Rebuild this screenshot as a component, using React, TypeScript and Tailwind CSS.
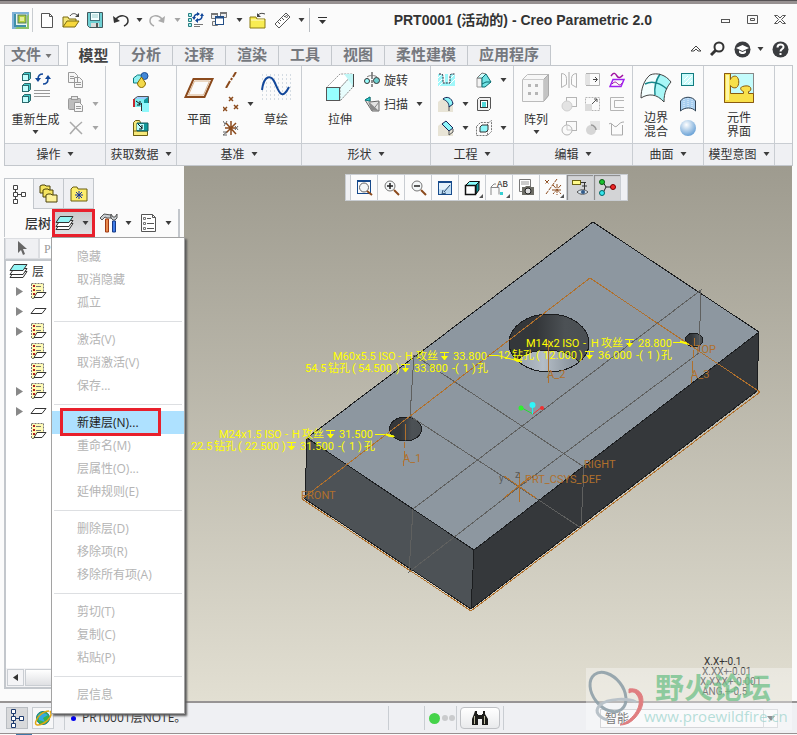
import type { ReactNode } from 'react';

interface IcoProps {
  w?: number;
  h?: number;
  children: ReactNode;
}

function Ico({ w = 16, h = 16, children }: IcoProps) {
  return (
    <svg width={w} height={h} viewBox={`0 0 ${w} ${h}`} fill="none" className="shrink-0" aria-hidden="true">
      {children}
    </svg>
  );
}

function Caret({ light = false }: { light?: boolean }) {
  return (
    <Ico w={7} h={4}>
      <path d="M0.500 0h6L3.500 4z" fill={light ? '#a5a5a5' : '#3c3c3c'} />
    </Ico>
  );
}

/* ---------- quick access icons ---------- */

const AppIcon = () => (
  <Ico w={17} h={17}>
    <rect x="0" y="0" width="17" height="17" fill="#7fb2d8" />
    <path d="M17 2v15H3z" fill="#8cc36a" />
    <rect x="2" y="2" width="13" height="13" fill="#eef6ee" />
    <path d="M3 2v12h11" stroke="#3f8fa8" strokeWidth="2" />
    <rect x="6" y="3" width="8" height="8" fill="#b4cf3c" stroke="#4b7d5c" />
    <rect x="8" y="5" width="4" height="4" fill="#e3ee9a" />
  </Ico>
);

const NewIcon = () => (
  <Ico w={14} h={17}>
    <path d="M1.500 1.500h8l3 3v11h-11z" fill="#fff" stroke="#555" />
    <path d="M9.500 1.500v3h3" stroke="#555" />
  </Ico>
);

const OpenIcon = () => (
  <Ico w={18} h={16}>
    <path d="M1 15V5h5l1 2h7v3" fill="#f4e77a" stroke="#7a6a10" />
    <path d="M1 15l4-6h12l-4 6z" fill="#f7d83c" stroke="#7a6a10" />
    <path d="M8 4c2-3 5-3 7-1" stroke="#444" />
    <path d="M17 1v4h-4z" fill="#444" />
  </Ico>
);

const SaveIcon = () => (
  <Ico w={16} h={16}>
    <path d="M0.500 0.500h15v15h-13l-2-2z" fill="#6fd0d4" stroke="#44585c" />
    <rect x="3.500" y="0.500" width="9" height="8" fill="#f3ffff" stroke="#44707a" />
    <path d="M5 3h6M5 5h6" stroke="#9cc" />
    <rect x="4" y="11" width="8" height="4" fill="#dcdcdc" />
    <rect x="9" y="11" width="2" height="4" fill="#555" />
  </Ico>
);

const UndoIcon = ({ color = '#333' }: { color?: string }) => (
  <Ico w={16} h={14}>
    <path d="M3 6c4-5 12-4 12 2 0 3-2 4-4 5" stroke={color} strokeWidth="1.500" />
    <path d="M0 3l1 7 6-2z" fill={color} />
  </Ico>
);

const RedoIcon = () => (
  <Ico w={16} h={14}>
    <path d="M13 6C9 1 1 2 1 8c0 3 2 4 4 5" stroke="#aaa" strokeWidth="1.500" />
    <path d="M16 3l-1 7-6-2z" fill="#aaa" />
  </Ico>
);

const RegenSmallIcon = () => (
  <Ico w={17} h={16}>
    <path d="M1.500 1.500h3v3h-3zM1.500 6.500h3v3h-3zM1.500 11.500h3v3h-3z" fill="#a7f2f2" stroke="#2a7d80" />
    <path d="M7 6c0-3 2-4 5-4M15 4c0 3-2 4-5 4" stroke="#12479a" strokeWidth="1.500" />
    <path d="M10 0v4l3-2zM11 6v5L8 8.500zM5 5h4L7 8zM13 4h4l-2-3z" fill="#12479a" />
    <path d="M7 12.500h9M7 14.500h6" stroke="#777" />
  </Ico>
);

const WindowsIcon = () => (
  <Ico w={16} h={16}>
    <path d="M0.500 1.500h6v5h-6zM9.500 0.500h6v5h-6zM1.500 9.500h5v4h-5z" fill="#eee" stroke="#777" />
    <path d="M0 2h7M9 1h7" stroke="#777" strokeWidth="2" />
    <rect x="4.500" y="4.500" width="8" height="8" fill="#fff" stroke="#234e87" />
    <path d="M4 5.500h9" stroke="#234e87" strokeWidth="2" />
  </Ico>
);

const FolderCloseIcon = () => (
  <Ico w={17} h={17}>
    <path d="M1 16V5h6l1 2h8v9z" fill="#f8ec52" stroke="#8b7a12" />
    <path d="M2 8h13" stroke="#fffbd0" />
    <path d="M9 3c2-2 4-2 7-1" stroke="#444" />
    <path d="M8 1v4h4z" fill="#444" />
  </Ico>
);

const RulerIcon = () => (
  <Ico w={18} h={17}>
    <path d="M1 12L12 1l4 4L5 16z" fill="#fff" stroke="#555" />
    <path d="M4 10l2 2M6 8l1 1M8 6l2 2M10 4l1 1" stroke="#555" />
    <circle cx="12.500" cy="4.500" r="1" stroke="#555" />
  </Ico>
);

/* ---------- ribbon icons ---------- */

const RegenIcon = () => (
  <Ico w={32} h={32}>
    {[1, 12, 23].map((y) => (
      <g key={y}>
        <path d={`M2.500 ${y + 1.5}l2-2h6v6l-2 2z`} fill="#3fc7c7" stroke="#2b6a6c" />
        <rect x="2.500" y={y + 1.5} width="6" height="6" fill="#c4ffff" stroke="#2b6a6c" />
      </g>
    ))}
    <path d="M18 7c0-4 2-5 5-5M28 7c0 4-2 5-5 5" stroke="#12479a" strokeWidth="1.500" />
    <path d="M15 6h6l-3 4zM25 7h6l-3-4z" fill="#12479a" />
    <path d="M14 18.500h16M14 21.500h16M14 24.500h16" stroke="#999" />
  </Ico>
);

const CopyIcon = () => (
  <Ico>
    <path d="M0.500 0.500h6l3 3v7h-9zM6.500 5.500h5l3 3v7h-8z" fill="#f6f6f6" stroke="#999" />
    <path d="M2 4.500h4M2 6.500h4M8 10.500h5M8 12.500h5" stroke="#999" />
  </Ico>
);

const PasteIcon = () => (
  <Ico>
    <rect x="0.500" y="2.500" width="12" height="11" rx="1" fill="#bdbdbd" stroke="#999" />
    <rect x="3.500" y="0.500" width="6" height="3" fill="#e5e5e5" stroke="#999" />
    <path d="M6.500 6.500h5l3 3v6h-8z" fill="#f6f6f6" stroke="#999" />
    <path d="M8 10.500h5M8 12.500h5" stroke="#999" />
  </Ico>
);

const DeleteIcon = () => (
  <Ico>
    <path d="M2 2l12 12M14 2C9 6 5 10 2 14" stroke="#aaa" strokeWidth="1.500" />
  </Ico>
);

const UserFeatureIcon = () => (
  <Ico>
    <path d="M0.500 6l4-3h4v8h-8z" fill="#8ff0f0" stroke="#0a7c80" />
    <circle cx="11.500" cy="4" r="3.500" fill="#4287d6" stroke="#1d4f96" />
    <path d="M8.500 5l4 6c0 6-8 6-8 0z" fill="#f3d94a" stroke="#8a6b00" />
  </Ico>
);

const CopyGeomIcon = () => (
  <Ico>
    <path d="M0.500 3.500l4-3h11v8h-15z" fill="#9cf" stroke="#555" />
    <rect x="2" y="3" width="9" height="8" fill="#7df0f0" />
    <path d="M11 4l4-3v8l-4 2z" fill="#119a9c" />
    <rect x="0" y="3" width="2" height="8" fill="#c4262e" />
    <path d="M3 5l4 3M7 5v4H4" stroke="#111" />
    <path d="M9 7h7v9H9z" fill="#8ff7fa" />
    <path d="M8.500 7v8" stroke="#333" />
  </Ico>
);

const ShrinkIcon = () => (
  <Ico>
    <path d="M0.500 2.500l2-2h4l1 2v13h-7z" fill="#f6e979" stroke="#6b5e12" />
    <path d="M0.500 11h14v4.500h-14z" fill="#f6e979" stroke="#6b5e12" />
    <path d="M4 3h11v8H4z" fill="#119a9c" stroke="#14585a" />
    <rect x="4" y="4" width="7" height="6" fill="#bff" />
    <path d="M5 4l4 4M9 5v4H6" stroke="#111" />
  </Ico>
);

const PlaneIcon = () => (
  <Ico w={32} h={32}>
    <path d="M10.500 7h19l-8 18h-19z" stroke="#8b4a1c" strokeWidth="2" />
    <path d="M11.500 9h15l-6 14h-15z" stroke="#d9b38c" />
  </Ico>
);

const AxisIcon = () => (
  <Ico>
    <path d="M13 0l-3 5M9 6l-1 2M7 9l-4 7" stroke="#8b4a1c" strokeWidth="2" />
  </Ico>
);

const PointIcon = () => (
  <Ico>
    <path d="M6 1l4 4M10 1L6 5M0 11l4 4M4 11l-4 4M11 9l4 4M15 9l-4 4" stroke="#8b4a1c" strokeWidth="1.500" />
  </Ico>
);

const CsysIcon = () => (
  <Ico>
    <path d="M8 1v14M2 8h11M3 3l10 11M13 3L3 13" stroke="#8b4a1c" strokeWidth="1.500" />
    <path d="M0 1l2 3M4 1L1 6M12 6l3 4M15 6l-3 4M0 12h4l-4 3h4" stroke="#666" />
  </Ico>
);

const SketchIcon = () => (
  <Ico w={32} h={32}>
    {[2, 6, 10, 14, 18, 22, 26].map((y) => (
      <path key={y} d={`M2 ${y + 1}h29`} stroke="#aebdcb" strokeWidth="1" strokeDasharray="1 3" />
    ))}
    <path d="M2 18C4 3 11 2 15 11s7 18 14 4" stroke="#12479a" strokeWidth="2" />
  </Ico>
);

const ExtrudeIcon = () => (
  <Ico w={32} h={32}>
    <path d="M2 16L16 2h13L16 16z" fill="#fff" stroke="#999" strokeDasharray="2 1" />
    <path d="M16 16L29 2v13L16 29z" fill="#e8fdfd" stroke="#888" strokeDasharray="2 1" />
    <path d="M20 2h9v12z" fill="#bff6f6" />
    <path d="M29.500 2v13" stroke="#444" />
    <rect x="2.500" y="15.500" width="13" height="13" fill="#97ffff" stroke="#555" />
  </Ico>
);

const RevolveIcon = () => (
  <Ico>
    <path d="M8 0v16" stroke="#222" strokeDasharray="3 1" />
    <circle cx="3" cy="9" r="2.500" fill="#9ff" stroke="#333" />
    <circle cx="12.500" cy="8.500" r="3" fill="#6ccfcf" stroke="#333" />
    <path d="M3 5c2-2 8-2 10 0" stroke="#777" />
  </Ico>
);

const SweepIcon = () => (
  <Ico>
    <path d="M1 4l5-3v5l9-1v10H8z" fill="#e4e4e4" stroke="#666" />
    <path d="M1 4l5-3v4z" fill="#35cfd2" stroke="#0a7c80" />
    <path d="M4 5l11 10-8-1z" fill="#8a8a8a" />
    <path d="M8 15l7-9" stroke="#888" />
  </Ico>
);

const HoleIcon = () => (
  <Ico w={17}>
    <path d="M0 2h5v9h2V2h3v9h2V2h5v12H0z" fill="#9ff7fa" />
    <path d="M0 6l4-4M0 11l4-4M1 14l5-5M12 12l5-5M13 6l4-4" stroke="#fff" />
    <path d="M1 2h3l1 2v7h7V4l1-2h4" stroke="#223" strokeDasharray="2 1" />
  </Ico>
);

const RoundIcon = () => (
  <Ico>
    <path d="M0 6l5-4 6 2 4 5v7H0z" fill="#e8e4d6" />
    <path d="M5 3c3-3 9-2 10 5l-4 3C11 7 9 5 5 3z" fill="#8ff7fa" stroke="#125" />
    <path d="M11 11v4" stroke="#555" />
  </Ico>
);

const ChamferIcon = () => (
  <Ico>
    <path d="M0 6l5-4 10 8v6H0z" fill="#e8e4d6" />
    <path d="M4 4l4-3 7 7-4 3z" fill="#8ff7fa" stroke="#125" />
    <path d="M11 11v4l4-3V9" stroke="#555" />
  </Ico>
);

const DraftIcon = () => (
  <Ico>
    <path d="M1 6h5v9H1z" fill="#f3f3f3" stroke="#999" />
    <path d="M1 6l5-5 4 1-4 4z" fill="#cff" stroke="#777" />
    <path d="M6 6l4-4 5 8-6 5H6z" fill="#72e3e5" stroke="#0a6c70" />
    <path d="M6 12l4-2 5 0" stroke="#0a6c70" />
  </Ico>
);

const ShellIcon = () => (
  <Ico>
    <path d="M1.500 3.500l2-2h11v11l-2 2h-11z" fill="#f0f0f0" stroke="#555" />
    <rect x="4.500" y="4.500" width="7" height="7" fill="#fff" stroke="#333" />
    <rect x="6" y="6" width="4" height="5" fill="#52d7d9" />
  </Ico>
);

const RibIcon = () => (
  <Ico>
    <path d="M0.500 6.500v9h11l4-4v-11l-4 3v12M0.500 6.500l4-4h8" stroke="#777" strokeDasharray="2 1" />
    <path d="M4 7l2-2h6v5l-2 2H4z" fill="#8ff7fa" stroke="#333" />
  </Ico>
);

const PatternIcon = () => (
  <Ico w={32} h={32}>
    <path d="M2.500 7.500l5-5h21v21l-5 6h-21z" fill="#f7f7f7" stroke="#bbb" />
    <path d="M23.500 7.500l5-5v21l-5 6z" fill="#c4c4c4" stroke="#aaa" />
    <path d="M2.500 7.500h21v22" stroke="#ccc" />
    <path d="M8 12h3v3H8zM15 12h3v3h-3zM8 20h3v3H8zM15 20h3v3h-3z" fill="#b5b5b5" />
  </Ico>
);

const MirrorIcon = () => (
  <Ico>
    <path d="M0.500 1.500c3 0 5 2 5 5v6l-5 3zM15.500 1.500c-3 0-5 2-5 5v6l5 3z" stroke="#b5b5b5" />
    <path d="M8 0v16" stroke="#aaa" />
  </Ico>
);

const ExtendIcon = () => (
  <Ico>
    <path d="M1 1.500h13.500v12H1" stroke="#b0b0b0" />
    <rect x="0" y="2" width="5" height="11" fill="#e3e3e3" />
    <path d="M8 7.500h4M10 5l2.500 2.500L10 10" stroke="#444" />
  </Ico>
);

const OffsetWaveIcon = () => (
  <Ico>
    <path d="M2 4c3-4 4-3 6 0s4 1 6-1" stroke="#a010a0" strokeWidth="1.500" />
    <path d="M4 7.500h11l-3 7H1z" stroke="#a020f0" strokeWidth="1.500" />
    <path d="M3 12c3-3 4-2 6 0s3 0 4-1" stroke="#a010a0" />
  </Ico>
);

const TrimIcon = () => (
  <Ico>
    <rect x="5.500" y="1.500" width="10" height="9" stroke="#b5b5b5" />
    <circle cx="6" cy="10" r="5" fill="#e3e3e3" stroke="#cfcfcf" />
  </Ico>
);

const ScaleIcon = () => (
  <Ico>
    <path d="M0.500 1.500h14v13h-14z" stroke="#b5b5b5" strokeDasharray="2 1" />
    <path d="M0 8h7v7H0z" fill="#dcdcdc" />
    <path d="M7 8l5-5M9 3h3v3" stroke="#555" />
  </Ico>
);

const BracketIcon = () => (
  <Ico>
    <path d="M15 1.500H1.500v13H15M15 4.500H5.500v7H15" stroke="#b5b5b5" />
  </Ico>
);

const MergeIcon = () => (
  <Ico>
    <rect x="5.500" y="1.500" width="10" height="9" fill="#fafafa" stroke="#b5b5b5" />
    <circle cx="6" cy="10" r="5" fill="#fafafa" stroke="#b5b5b5" />
    <path d="M6 5.500V10h5" stroke="#ccc" />
  </Ico>
);

const IntersectIcon = () => (
  <Ico>
    <rect x="5" y="1" width="10" height="9" fill="#e6e6e6" />
    <circle cx="6" cy="10" r="5" fill="#d6d6d6" />
    <path d="M6 5c3 0 5 3 5 5" stroke="#999" strokeWidth="1.500" />
  </Ico>
);

const ProjectIcon = () => (
  <Ico>
    <path d="M0 4c3-3 5 5 8 2s4-4 7-4M2.500 4v11h11V5" stroke="#aaa" />
  </Ico>
);

const BoundaryIcon = () => (
  <Ico w={32} h={32}>
    <path d="M10 3c7-3 16 0 21 7-4 5-7 10-7 20C17 22 9 21 1 26 1 17 4 8 10 3z" fill="#f3fefe" />
    <path d="M18 3c5-1 9 2 13 7-4 5-7 10-7 20l-9-7c0-8 1-14 3-20z" fill="#a8f7f7" />
    <path d="M20 2c-4 6-6 13-5 21M5 12c8-4 16 0 22 5" stroke="#17888c" strokeWidth="1.500" />
    <path d="M10 3c7-3 16 0 21 7-4 5-7 10-7 20C17 22 9 21 1 26 1 17 4 8 10 3z" stroke="#444" />
  </Ico>
);

const FillIcon = () => (
  <Ico>
    <rect x="1.500" y="1.500" width="12" height="12" fill="#c9fbfb" stroke="#127c80" />
    <path d="M4 12l8-8M4 8l4-4M8 12l4-4" stroke="#fff" />
  </Ico>
);

const StyleIcon = () => (
  <Ico>
    <path d="M0.500 14V5c3-5 12-5 15 0v10c-3-4-11-4-15 0z" fill="#a9cff0" stroke="#345" />
    <path d="M4 3v9M8 2v9M12 3v9" stroke="#e9f5ff" strokeDasharray="1 1" />
  </Ico>
);

const FreestyleIcon = () => (
  <Ico>
    <defs>
      <radialGradient id="ball" cx="0.4" cy="0.3" r="0.7">
        <stop offset="0" stopColor="#fff" />
        <stop offset="1" stopColor="#6aa2d6" />
      </radialGradient>
    </defs>
    <circle cx="8" cy="8" r="8" fill="url(#ball)" />
  </Ico>
);

const ComponentIcon = () => (
  <Ico w={32} h={32}>
    <rect x="1.500" y="1.500" width="29" height="29" fill="#c3fbfb" stroke="#888" />
    <path
      d="M1.500 1.500h6v6c1-3 4-4 6-3 3 2 3 9 0 11-2 1-5 0-6-2v8h13v-2c-3-1-4-4-1-5 3-1 7-1 8 1s0 4-2 4v2h5v9h-29z"
      fill="#f8e04a"
      stroke="#8a5a10"
    />
    <path d="M3 3h3v25H3z" fill="#fdf7a8" />
  </Ico>
);

/* ---------- navigator icons ---------- */

const TreeIcon = ({ color = '#444' }: { color?: string }) => (
  <Ico w={14} h={20}>
    <path d="M1.500 1.500h4v4h-4zM1.500 8.500h4v4h-4zM1.500 15.500h4v4h-4zM9.500 8.500h4v4h-4z" stroke={color} fill="#fff" />
    <path d="M3.500 5.500v3M3.500 12.500v3M5.500 10.500h4" stroke={color} />
  </Ico>
);

const FoldersIcon = () => (
  <Ico w={19} h={20}>
    <path d="M1 9V2l2-1h3l1 1h4v7z" fill="#f5e45f" stroke="#4d430a" />
    <path d="M4 13V6l2-1h3l1 1h4v7z" fill="#f5e45f" stroke="#4d430a" />
    <path d="M7 18v-7l2-1h3l1 1h5v7z" fill="#fdf29a" stroke="#4d430a" />
  </Ico>
);

const FavoritesIcon = () => (
  <Ico w={18} h={16}>
    <path d="M1 15V3l2-2h4l1 2h9v12z" fill="#fdee6d" stroke="#6b5e12" />
    <path d="M9 5v8M5 9h8M6 6l6 6M12 6l-6 6" stroke="#1430a0" />
  </Ico>
);

const LayersIcon = () => (
  <Ico w={19} h={16}>
    <path d="M5 8.500h13l-4 6H1z" fill="#fff" stroke="#333" />
    <path d="M5 5.500h13l-4 6H1z" fill="#fff" stroke="#333" />
    <path d="M5 1.500h13l-4 6H1z" fill="#93f5f5" stroke="#333" />
  </Ico>
);

const ToolsIcon = () => (
  <Ico w={20} h={20}>
    <path d="M1 5l4-4 7 1v3H8L6 4 3 7z" fill="#c9ced2" stroke="#555" />
    <path d="M6.500 6h3v13h-3z" fill="#e88a4e" stroke="#a03a14" />
    <path d="M12 1v4l2 2h2l2-2V1l-2 3h-2z" fill="#c9ced2" stroke="#555" />
    <path d="M13.500 8h3v11h-3z" fill="#3f7ce8" stroke="#173a86" />
  </Ico>
);

const SettingsIcon = () => (
  <Ico w={17} h={20}>
    <path d="M1.500 1.500h11l3 3v14h-14z" fill="#fff" stroke="#555" />
    <path d="M12.500 1.500v3h3M7 5.500h4M7 10.500h7M7 15.500h7" stroke="#555" />
    <path d="M3.500 4.500h2v2h-2zM3.500 9.500h2v2h-2zM3.500 14.500h2v2h-2z" stroke="#777" />
  </Ico>
);

const LayerNoteIcon = () => (
  <Ico w={17} h={17}>
    <path d="M1.500 0.500h12v9l-5 1-4 5h-3z" fill="#fffbb5" stroke="#777" strokeDasharray="2 1" />
    <path d="M3 2h2v2H3zM3 6h2v2H3zM3 10h2v2H3z" fill="#b02020" />
    <path d="M6 3.500h5M6 7.500h5" stroke="#777" />
    <path d="M7 9.500h9l-4 5H4z" fill="#fff" stroke="#333" />
  </Ico>
);

const PlainLayerIcon = () => (
  <Ico w={17} h={8}>
    <path d="M5 1.500h11l-4 5H1z" fill="#fff" stroke="#333" />
  </Ico>
);

const GlobeIcon = () => (
  <Ico w={18} h={18}>
    <circle cx="9" cy="9" r="6.500" fill="#37b34a" stroke="#137a8a" />
    <path d="M4 6c3-3 7-2 10 0l-5 3 2 4-6-2z" fill="#35a8e0" />
    <path d="M16 2c3 4-1 9-6 12s-10 3-8-2c1-4 7-10 13-10" stroke="#e0a712" strokeWidth="1.500" />
  </Ico>
);

/* ---------- view toolbar icons ---------- */

const lens = (
  <>
    <circle cx="7" cy="7" r="5" fill="#f4f7f8" stroke="#777" />
    <path d="M11 11l5 5" stroke="#8b4a1c" strokeWidth="2" />
  </>
);

const viewIcons: { name: string; on?: boolean; more?: boolean; icon: ReactNode }[] = [
  {
    name: '重新调整',
    icon: (
      <Ico w={17} h={17}>
        <rect x="1.500" y="2.500" width="13" height="12" stroke="#164a8c" />
        <path d="M1 2h14" stroke="#164a8c" strokeWidth="2" />
        <circle cx="8" cy="8.500" r="4.500" fill="#f4f7f8" stroke="#666" />
        <path d="M11 12l5 4" stroke="#8b4a1c" strokeWidth="2" />
      </Ico>
    ),
  },
  { name: '放大', icon: <Ico w={17} h={17}>{lens}<path d="M4 7h6M7 4v6" stroke="#222" strokeWidth="1.500" /></Ico> },
  { name: '缩小', icon: <Ico w={17} h={17}>{lens}<path d="M4 7h6" stroke="#222" strokeWidth="1.500" /></Ico> },
  {
    name: '重画',
    icon: (
      <Ico w={16} h={16}>
        <rect x="1.500" y="1.500" width="13" height="13" fill="#e4f2fc" stroke="#164a8c" />
        <path d="M1 2h14" stroke="#164a8c" strokeWidth="2" />
        <path d="M2 9c5 2 9-1 12-6v11H2z" fill="#bfdcf2" />
        <path d="M13 5l-6 7M6 10l-1 4 4-1" stroke="#274a6e" />
      </Ico>
    ),
  },
  {
    name: '显示样式',
    more: true,
    icon: (
      <Ico w={16} h={16}>
        <path d="M1.500 5.500l4-4h10l-3 4z" fill="#8ff" stroke="#111" />
        <path d="M12 5l3-3v8l-3 4z" fill="#119a9c" stroke="#111" />
        <rect x="1.500" y="5.500" width="10" height="9" fill="#fff" stroke="#111" strokeWidth="1.500" />
      </Ico>
    ),
  },
  {
    name: '已命名视图',
    more: true,
    icon: (
      <Ico w={18} h={16}>
        <path d="M1 15V7l3-3h2M1 7.500h8v7" stroke="#888" />
        <path d="M10 12h3v3h-3z" fill="#35cfd2" />
        <text x="7" y="7" fontSize="9" fill="#222" fontFamily="Liberation Mono">AB</text>
      </Ico>
    ),
  },
  {
    name: '视图管理器',
    icon: (
      <Ico w={17} h={17}>
        <path d="M1.500 0.500h11v12h-11z" fill="#fff" stroke="#777" />
        <path d="M3 3h8M3 5h8" stroke="#999" />
        <path d="M4 8h3l1-1h4l1 1h3v8H4z" fill="#6d6d66" />
        <circle cx="10" cy="12" r="3" fill="#ddd" stroke="#222" />
      </Ico>
    ),
  },
  {
    name: '基准显示过滤器',
    more: true,
    icon: (
      <Ico w={18} h={17}>
        <path d="M1 1l4 4M5 1L1 5M13 0L2 15M9 6l8 9M17 6l-8 9M13 5v11M8 11h10" stroke="#8b4a1c" strokeDasharray="4 1" />
      </Ico>
    ),
  },
  {
    name: '注释显示',
    on: true,
    icon: (
      <Ico w={17} h={17}>
        <rect x="0.500" y="1.500" width="8" height="4" fill="#fffb8a" stroke="#6b6212" />
        <path d="M9 3.500h5M10 7h5M12.500 4v7" stroke="#333" />
        <path d="M5 13c3-3 8-3 11 0-3 3-8 3-11 0z" fill="#d9e6f0" stroke="#555" />
        <circle cx="11" cy="13" r="2" fill="#335b8a" />
      </Ico>
    ),
  },
  {
    name: '旋转中心',
    on: true,
    icon: (
      <Ico w={17} h={17}>
        <path d="M4 3l3 5h7M7 8l-3 6" stroke="#222" />
        <circle cx="3" cy="3" r="2.500" fill="#19c430" stroke="#0a5a14" />
        <circle cx="14" cy="8" r="2.500" fill="#f02828" stroke="#700" />
        <circle cx="3" cy="14" r="2.500" fill="#35e5ee" stroke="#066" />
      </Ico>
    ),
  },
];

/* ---------- title bar ---------- */

function QuickButton({ label, className, children }: { label: string; className: string; children: ReactNode }) {
  return (
    <button type="button" aria-label={label} className={`flex h-6 items-center justify-center ${className}`}>
      {children}
    </button>
  );
}

function TitleBar() {
  return (
    <header className="flex h-8 items-center pl-2">
      <QuickButton label="Creo" className="w-6"><AppIcon /></QuickButton>
      <span className="h-6 w-px bg-[#c8ccd0]" />
      <QuickButton label="新建" className="w-7"><NewIcon /></QuickButton>
      <QuickButton label="打开" className="w-5"><OpenIcon /></QuickButton>
      <QuickButton label="保存" className="w-7"><SaveIcon /></QuickButton>
      <QuickButton label="撤消" className="w-6"><UndoIcon /></QuickButton>
      <QuickButton label="撤消列表" className="w-3"><Caret /></QuickButton>
      <QuickButton label="重做" className="w-6"><RedoIcon /></QuickButton>
      <QuickButton label="重做列表" className="w-4"><Caret light /></QuickButton>
      <QuickButton label="重新生成" className="w-5"><RegenSmallIcon /></QuickButton>
      <QuickButton label="窗口" className="w-7"><WindowsIcon /></QuickButton>
      <QuickButton label="窗口列表" className="w-3"><Caret /></QuickButton>
      <QuickButton label="关闭" className="w-6"><FolderCloseIcon /></QuickButton>
      <QuickButton label="测量" className="w-7"><RulerIcon /></QuickButton>
      <QuickButton label="测量列表" className="w-2"><Caret /></QuickButton>
      <span className="ml-1 h-6 w-px bg-[#b9bdc2]" />
      <QuickButton label="自定义快速访问工具栏" className="w-6">
        <Ico w={9} h={7}>
          <path d="M0 0.500h9" stroke="#333" />
          <path d="M1 3h7L4.500 7z" fill="#333" />
        </Ico>
      </QuickButton>
      <h1 className="ml-auto font-['Liberation_Sans','Noto_Sans_CJK_SC',sans-serif] text-[14px] font-bold whitespace-nowrap text-[#333]">
        PRT0001 (活动的) - Creo Parametric 2.0
      </h1>
      <div className="ml-[66px] flex w-[79px] items-center gap-[11px]">
        <button type="button" aria-label="最小化" className="flex h-5 w-4 items-center justify-center">
          <Ico w={10} h={10}><rect x="0.500" y="4.500" width="8" height="3" stroke="#555" /></Ico>
        </button>
        <button type="button" aria-label="还原" className="flex h-5 w-4 items-center justify-center">
          <Ico w={12} h={10}><path d="M0.500 0.500h10v8h-10zM3.500 3.500h4v2h-4z" stroke="#555" /></Ico>
        </button>
        <button type="button" aria-label="关闭窗口" className="flex h-5 w-4 items-center justify-center">
          <Ico w={12} h={10}>
            <path d="M0.500 0.500h3L6 3l2.500-2.500h3L7.500 4.500l4 4h-3L6 6 3.500 8.500h-3l4-4z" stroke="#555" />
          </Ico>
        </button>
      </div>
    </header>
  );
}

/* ---------- ribbon ---------- */

const tabs = ['分析', '注释', '渲染', '工具', '视图'];

function TabRow() {
  return (
    <nav className="flex h-[29px] items-end text-[15px] leading-4 font-bold text-[#75787e]">
      <button type="button" className="flex h-5 w-[55px] justify-center gap-1 border border-b-0 border-[#c3c7cc] bg-[#eff0f3]">
        文件
        <span className="mt-2"><Ico w={7} h={4}><path d="M0.500 0h6L3.500 4z" fill="#777" /></Ico></span>
      </button>
      <button type="button" className="relative z-10 -mb-px ml-2 h-6 w-[53px] border border-b-0 border-[#c3c7cc] bg-[#fbfbfb] text-[#444]">
        模型
      </button>
      {tabs.map((t) => (
        <button key={t} type="button" className="flex h-5 w-[53px] justify-center border-t border-r border-[#c3c7cc] bg-[#eff0f3]">
          {t}
        </button>
      ))}
      <button type="button" className="flex h-5 w-[83px] justify-center border-t border-r border-[#c3c7cc] bg-[#eff0f3]">柔性建模</button>
      <button type="button" className="flex h-5 w-[83px] justify-center border-t border-r border-[#c3c7cc] bg-[#eff0f3]">应用程序</button>
      <div className="mr-1 ml-auto flex h-8 items-center gap-2">
        <button type="button" aria-label="最小化功能区">
          <Ico w={12} h={8}><path d="M1 6l5-5 5 5H8L6 4 4 6z" stroke="#444" /></Ico>
        </button>
        <button type="button" aria-label="搜索">
          <Ico w={16} h={16}>
            <circle cx="9" cy="6" r="4.500" stroke="#333" strokeWidth="2" />
            <path d="M6 9l-5 5" stroke="#333" strokeWidth="3" />
          </Ico>
        </button>
        <button type="button" aria-label="学习" className="flex items-center gap-1.5">
          <Ico w={17} h={17}>
            <circle cx="8.500" cy="8.500" r="8" fill="#3a3c3f" />
            <path d="M2 7l6.500-3L15 7l-6.500 3z" fill="#fff" />
            <path d="M5 9.500v2c2 2 5 2 7 0v-2l-3.500 1.500z" fill="#fff" />
          </Ico>
          <Caret />
        </button>
        <button type="button" aria-label="帮助">
          <Ico w={17} h={17}>
            <circle cx="8.500" cy="8.500" r="8" fill="#3a3c3f" />
            <path d="M5.500 6.500c0-4 6-4 6-0.500 0 2-3 2-3 4.500" stroke="#fff" strokeWidth="2" />
            <rect x="7.500" y="12" width="2" height="2" fill="#fff" />
          </Ico>
        </button>
      </div>
    </nav>
  );
}

function Group({ title, className, children }: { title: string; className: string; children: ReactNode }) {
  return (
    <section className={`flex flex-col border-r border-[#c9cdd2] ${className}`}>
      <div className="flex h-[77px] pt-0.5">{children}</div>
      <button type="button" className="flex h-[22px] items-center justify-center gap-1.5 border-t border-[#c9cdd2] bg-[#eff0f3] pb-0.5">
        {title}
        <Caret />
      </button>
    </section>
  );
}

function BigButton({ lines, icon, caret, className = '' }: { lines: string[]; icon: ReactNode; caret?: boolean; className?: string }) {
  return (
    <button type="button" className={`flex shrink-0 flex-col items-center pt-1 leading-[14px] whitespace-nowrap ${className}`}>
      {icon}
      <span className={lines.length > 1 ? 'mt-1.5' : 'mt-2'}>
        {lines.map((l) => (
          <span key={l} className="block">{l}</span>
        ))}
      </span>
      {caret && <span className="mt-1"><Caret /></span>}
    </button>
  );
}

function Cell({ label, icon, caret, text, light }: { label: string; icon: ReactNode; caret?: boolean; text?: boolean; light?: boolean }) {
  return (
    <button type="button" aria-label={label} className="flex h-6 items-center gap-1 whitespace-nowrap">
      {icon}
      {text && label}
      {caret && <span className="ml-1"><Caret light={light} /></span>}
    </button>
  );
}

function Ribbon() {
  return (
    <div className="flex border border-[#c3c7cc] bg-[#fbfbfb] text-[12px] text-[#333]">
      <Group title="操作" className="w-[101px]">
        <BigButton className="w-[61px]" lines={['重新生成']} icon={<RegenIcon />} caret />
        <div className="ml-0.5">
          <Cell label="复制" icon={<CopyIcon />} />
          <Cell label="粘贴" icon={<PasteIcon />} caret light />
          <Cell label="删除" icon={<DeleteIcon />} caret light />
        </div>
      </Group>
      <Group title="获取数据" className="w-[71px]">
        <div className="mx-auto">
          <Cell label="用户定义特征" icon={<UserFeatureIcon />} />
          <Cell label="复制几何" icon={<CopyGeomIcon />} />
          <Cell label="收缩包络" icon={<ShrinkIcon />} />
        </div>
      </Group>
      <Group title="基准" className="w-[125px]">
        <BigButton className="w-11" lines={['平面']} icon={<PlaneIcon />} />
        <div className="ml-0.5">
          <Cell label="轴" icon={<AxisIcon />} />
          <Cell label="点" icon={<PointIcon />} caret />
          <Cell label="坐标系" icon={<CsysIcon />} />
        </div>
        <BigButton className="w-11" lines={['草绘']} icon={<SketchIcon />} />
      </Group>
      <Group title="形状" className="w-[129px]">
        <BigButton className="ml-4 w-11" lines={['拉伸']} icon={<ExtrudeIcon />} />
        <div className="ml-0.5">
          <Cell label="旋转" icon={<RevolveIcon />} text />
          <Cell label="扫描" icon={<SweepIcon />} text caret />
        </div>
      </Group>
      <Group title="工程" className="w-[83px]">
        <div className="ml-[7px] w-[38px]">
          <Cell label="孔" icon={<HoleIcon />} />
          <Cell label="倒圆角" icon={<RoundIcon />} caret />
          <Cell label="倒角" icon={<ChamferIcon />} caret />
        </div>
        <div>
          <Cell label="拔模" icon={<DraftIcon />} caret />
          <Cell label="壳" icon={<ShellIcon />} />
          <Cell label="筋" icon={<RibIcon />} caret />
        </div>
      </Group>
      <Group title="编辑" className="w-[119px]">
        <BigButton className="ml-1 w-9" lines={['阵列']} icon={<PatternIcon />} caret />
        <div className="ml-[7px] grid h-[72px] grid-cols-[24px_24px_24px]">
          <Cell label="镜像" icon={<MirrorIcon />} />
          <Cell label="延伸" icon={<ExtendIcon />} />
          <Cell label="投影" icon={<OffsetWaveIcon />} />
          <Cell label="修剪" icon={<TrimIcon />} />
          <Cell label="偏移" icon={<ScaleIcon />} />
          <Cell label="加厚" icon={<BracketIcon />} />
          <Cell label="合并" icon={<MergeIcon />} />
          <Cell label="相交" icon={<IntersectIcon />} />
          <Cell label="实体化" icon={<ProjectIcon />} />
        </div>
      </Group>
      <Group title="曲面" className="w-[71px]">
        <BigButton className="ml-[3px] w-10" lines={['边界', '混合']} icon={<BoundaryIcon />} />
        <div className="ml-1">
          <Cell label="填充" icon={<FillIcon />} />
          <Cell label="样式" icon={<StyleIcon />} />
          <Cell label="自由式" icon={<FreestyleIcon />} />
        </div>
      </Group>
      <Group title="模型意图" className="w-[71px]">
        <BigButton className="mx-auto w-10" lines={['元件', '界面']} icon={<ComponentIcon />} />
      </Group>
      <div className="flex-1 pt-[77px]">
        <div className="h-[22px] border-t border-[#c9cdd2] bg-[#eff0f3]" />
      </div>
    </div>
  );
}

/* ---------- navigator ---------- */

const treeRows = [
  { open: true, note: true },
  { open: true, note: false },
  { open: true, note: true },
  { open: false, note: true },
  { open: false, note: true },
  { open: true, note: true },
  { open: true, note: false },
  { open: false, note: true },
];

const menuGroups = [
  ['隐藏', '取消隐藏', '孤立'],
  ['激活(V)', '取消激活(V)', '保存...'],
  ['新建层(N)...', '重命名(M)', '层属性(O)...', '延伸规则(E)'],
  ['删除层(D)', '移除项(R)', '移除所有项(A)'],
  ['剪切(T)', '复制(C)', '粘贴(P)'],
  ['层信息'],
];

function LayerMenu() {
  return (
    <div
      role="menu"
      className="absolute top-7 left-[47px] z-20 w-[134px] border border-[#a3a3a3] bg-white py-[7px] font-['Open_Sans','Noto_Sans_CJK_SC',sans-serif] text-[12px] shadow-[2px_2px_2px_#5a5a5a]"
    >
      {menuGroups.map((group, i) => (
        <div key={group[0]}>
          {i > 0 && <div className="mx-0.5 my-1.5 h-0.5 border-b border-[#dddfe2]" />}
          {group.map((item) => {
            const active = item === '新建层(N)...';
            return (
              <button
                key={item}
                type="button"
                role="menuitem"
                disabled={!active}
                className={`relative block h-[23px] w-full pl-[25px] text-left leading-[23px] ${active ? 'bg-[#aee1ff] text-[#222]' : 'text-[#b4b4b4]'}`}
              >
                {item}
                {active && <span className="absolute -top-[3px] left-2 h-7 w-[101px] border-[3px] border-[#e8202c]" />}
              </button>
            );
          })}
        </div>
      ))}
    </div>
  );
}

function Navigator() {
  return (
    <aside className="flex w-[180px] shrink-0 flex-col pt-3">
      <div className="flex h-[31px]">
        <button type="button" aria-label="模型树" className="flex w-[30px] items-center justify-center border border-b-0 border-[#c3c7cc]">
          <TreeIcon />
        </button>
        <button type="button" aria-label="文件夹浏览器" className="flex w-[30px] items-center justify-center border border-l-0 border-[#c3c7cc] bg-[#eff0f3]">
          <FoldersIcon />
        </button>
        <button type="button" aria-label="收藏夹" className="flex w-[30px] items-center justify-center border border-l-0 border-[#c3c7cc] bg-[#eff0f3]">
          <FavoritesIcon />
        </button>
      </div>
      <div className="relative flex min-h-0 flex-1 flex-col">
        <div className="mr-1 flex h-7 shrink-0 items-center border-r-2 border-l border-[#c3c7cc]">
          <span className="w-[46px] text-right text-[13px] font-medium text-[#333]">层树</span>
          <button
            type="button"
            aria-label="层"
            className="ml-px flex h-full w-[43px] items-center gap-2 border-[3px] border-[#e8202c] bg-linear-to-b from-[#c9cacc] to-[#e0e1e3]"
          >
            <LayersIcon />
            <Caret />
          </button>
          <button type="button" aria-label="设置" className="ml-1 flex items-center gap-1.5">
            <ToolsIcon />
            <Caret />
          </button>
          <button type="button" aria-label="显示" className="ml-2 flex items-center gap-2">
            <SettingsIcon />
            <Caret />
          </button>
        </div>
        <div className="mt-px flex h-[21px] shrink-0 border-l border-[#c3c7cc]">
          <button type="button" aria-label="选择" className="flex w-[34px] items-center justify-center border border-[#dcdee2] bg-[#eff0f3]">
            <Ico w={10} h={15}>
              <path d="M1 0v12l3-3 2 5 2-1-2-5h4z" fill="#666" />
            </Ico>
          </button>
          <input
            aria-label="活动模型"
            defaultValue="P"
            className="min-w-0 flex-1 border border-[#dcdee2] bg-white pl-1 font-['Liberation_Serif',serif] text-[12px] text-[#999]"
          />
        </div>
        <div className="mb-3 flex min-h-0 flex-1 flex-col border-2 border-[#c3c7cc] bg-white text-[12px]">
          <div className="flex h-5 items-center gap-1 pl-[3px] text-[#333]">
            <LayersIcon />
            层
          </div>
          {treeRows.map((row, i) => (
            <div key={i} className="flex h-5 items-center pl-2.5">
              <span className="w-[14px]">
                {row.open && <Ico w={7} h={9}><path d="M0 0l7 4.500L0 9z" fill="#888" /></Ico>}
              </span>
              {row.note ? <LayerNoteIcon /> : <PlainLayerIcon />}
            </div>
          ))}
          <div className="mt-auto flex h-[19px] gap-px bg-[#f3f3f5] p-px">
            <button type="button" aria-label="向左滚动" className="flex w-[17px] items-center justify-center border border-[#c9cdd2] bg-[#f4f4f6]">
              <Ico w={5} h={7}><path d="M5 0v7L0 3.500z" fill="#333" /></Ico>
            </button>
            <div className="w-28 border border-[#c9cdd2] bg-linear-to-b from-white to-[#dfe0e3]" />
          </div>
        </div>
        <LayerMenu />
      </div>
    </aside>
  );
}

/* ---------- graphics window ---------- */

interface NoteProps {
  x: number;
  y: number;
  depth: number; // offset of the hole depth symbol
  parts: [number, string][];
}

function Note({ x, y, depth, parts }: NoteProps) {
  return (
    <g>
      <text y={y}>
        {parts.map(([dx, t]) => (
          <tspan key={dx} x={x + dx}>{t}</tspan>
        ))}
      </text>
      <path
        d={`M${x + depth} ${y - 7.5}h9M${x + depth + 4.5} ${y - 7.5}v7M${x + depth + 1.5} ${y - 4}l3 4 3-4`}
        stroke="#ffff00"
      />
    </g>
  );
}

function Model() {
  return (
    <svg viewBox="184 166 608 535" className="absolute inset-0 h-full w-full" fill="none" role="img" aria-label="PRT0001">
      <defs>
        <linearGradient id="bore" x1="0" x2="1">
          <stop offset="0" stopColor="#34373a" />
          <stop offset="0.350" stopColor="#34373a" />
          <stop offset="0.700" stopColor="#4c5155" />
          <stop offset="1" stopColor="#4a4f53" />
        </linearGradient>
        <linearGradient id="floor" x1="0" x2="1">
          <stop offset="0" stopColor="#8d97a0" />
          <stop offset="0.450" stopColor="#b4bdc6" />
          <stop offset="0.800" stopColor="#8d97a0" />
        </linearGradient>
        <clipPath id="bigHole">
          <ellipse cx="549" cy="343" rx="40" ry="29" />
        </clipPath>
      </defs>

      <g shapeRendering="crispEdges">
        <path d="M593 222L759 332 474 550 307 438z" fill="#8d97a0" />
        <path d="M307 438L474 550 471 609 305 499z" fill="#4d5256" />
        <path d="M474 550L759 332 757 391 471 609z" fill="#35383b" />
        <path d="M593 222L759 332 474 550 307 438zM307 438l-2 61 166 110 3-59M759 332l-2 59-286 218" stroke="#1b1d1f" />

        <ellipse cx="549" cy="343" rx="40" ry="29" fill="url(#bore)" />
        <ellipse cx="547" cy="379" rx="40" ry="29" fill="url(#floor)" stroke="#222" clipPath="url(#bigHole)" />
        <ellipse cx="549" cy="343" rx="40" ry="29" stroke="#1b1d1f" />
        <ellipse cx="405.500" cy="429" rx="16" ry="12" fill="url(#bore)" stroke="#1b1d1f" />
        <ellipse cx="694" cy="340" rx="9" ry="7" fill="url(#bore)" stroke="#1b1d1f" />

        <g stroke="#5f605f">
          <path d="M701 290L413 509l-4 63 110-85 180-134z" />
          <path d="M414 355l170 112-3 61-62-41-109-71z" />
        </g>
        <g stroke="#b0702c">
          <path d="M302 499L590 278l170 114-289 219z" />
          <path d="M405.500 424v16M404.500 442v6M404.500 451v7M403.500 461v5M548.500 340v32M548.500 375v8M694.500 338v8M693.500 350v8M692.500 361v12M691.500 377v6" />
          <path d="M519.500 473v29M504 476l32 22M504 498l27-22" />
        </g>
      </g>

      <path d="M533 414l-11-6" stroke="#20e030" />
      <path d="M533 414l9-7" stroke="#f03030" />
      <path d="M532.500 414v-8" stroke="#20f0f0" />
      <circle cx="521" cy="408" r="2.500" fill="#30f030" />
      <circle cx="542" cy="408" r="2" fill="#f03030" />
      <circle cx="532.500" cy="405" r="3" fill="#30f5f8" />

      <g fill="#b0702c" fontSize="11">
        <text x="403" y="462">A_1</text>
        <text x="547" y="378">A_2</text>
        <text x="691" y="378">A_3</text>
        <text x="695" y="353">TOP</text>
        <text x="584" y="468">RIGHT</text>
        <text x="301" y="499">FRONT</text>
        <text x="525" y="483">PRT_CSYS_DEF</text>
      </g>
      <g fill="#5a5b5b" fontSize="10">
        <text x="515" y="478">z</text>
        <text x="499" y="482">y</text>
      </g>

      <g fill="#ffff00" fontSize="11">
        <Note x={333} y={360} depth={107} parts={[[0, 'M60x5.5 ISO'], [65, '-'], [72, 'H'], [83, '攻丝'], [120, '33.800']]} />
        <Note x={305} y={372} depth={96} parts={[[0, '54.5'], [23, '钻孔'], [47, '('], [53, '54.500'], [91, ')'], [109, '33.800'], [147, '-('], [158, '1'], [167, ')'], [172, '孔']]} />
        <Note x={526} y={347} depth={99} parts={[[0, 'M14x2 ISO'], [57, '-'], [65, 'H'], [75, '攻丝'], [112, '28.800']]} />
        <Note x={498} y={359} depth={87} parts={[[0, '12'], [14, '钻孔'], [38, '('], [45, '12.000'], [81, ')'], [100, '36.000'], [138, '-('], [149, '1'], [158, ')'], [163, '孔']]} />
        <Note x={219} y={438} depth={107} parts={[[0, 'M24x1.5 ISO'], [66, '-'], [73, 'H'], [83, '攻丝'], [120, '31.500']]} />
        <Note x={191} y={450} depth={96} parts={[[0, '22.5'], [23, '钻孔'], [47, '('], [54, '22.500'], [91, ')'], [109, '31.500'], [147, '-('], [158, '1'], [167, ')'], [173, '孔']]} />
      </g>
      <g stroke="#ffff00">
        <path d="M375 434.500h9l8 2M489 355.500h9l22 6M673 342.500h8l8 2" />
        <path d="M386 434l8 2v1l-6-1zM514 358l8 4-6-1zM680 341l7 2v1z" fill="#ffff00" />
      </g>

      <g fill="#333" fontSize="10">
        <text x="704" y="665">X.X+-0.1</text>
        <text x="702" y="675">X.XX+-0.01</text>
        <text x="700" y="685">X.XXX+-0.001</text>
        <text x="702" y="695">ANG.+-0.5</text>
      </g>
    </svg>
  );
}

function ViewToolbar() {
  return (
    <div role="toolbar" className="relative z-10 mt-[7px] mr-[164px] ml-auto flex h-[27px] w-[283px] border border-[#c9cdd2] bg-[#eff0f3]">
      <span className="w-1" />
      {viewIcons.map((v) => (
        <button
          key={v.name}
          type="button"
          aria-label={v.name}
          className={`relative flex w-[27px] items-center justify-center border-l border-[#c9cdd2] ${v.on ? 'bg-[#d3d4d6] shadow-[inset_1px_1px_1px_#888]' : 'bg-[#fbfbfb]'}`}
        >
          {v.icon}
          {v.more && (
            <span className="absolute right-0.5 bottom-0.5">
              <Ico w={4} h={4}><path d="M4 0v4H0z" fill="#555" /></Ico>
            </span>
          )}
        </button>
      ))}
      <span className="flex-1 border-l border-[#c9cdd2]" />
    </div>
  );
}

/* ---------- status bar ---------- */

function StatusBar() {
  return (
    <footer className="flex h-8 items-center border-t-2 border-[#979494] bg-[#eff0f3] pl-1.5 text-[12px] text-[#333]">
      <button type="button" aria-label="导航器" className="flex h-[22px] w-[22px] items-center justify-center border border-[#b9bdc2] bg-[#d8d9db]">
        <TreeIcon color="#1d3a6e" />
      </button>
      <button type="button" aria-label="浏览器" className="ml-1 flex h-[22px] w-[22px] items-center justify-center border border-[#c9cdd2] bg-[#f7f7f8]">
        <GlobeIcon />
      </button>
      <span className="ml-2.5 h-6 w-px bg-[#c9cdd2]" />
      <span className="ml-1.5 h-[5px] w-[5px] rounded-full bg-[#0000f0]" />
      <p className="ml-1.5 flex-1 font-['Open_Sans','Noto_Sans_CJK_SC',sans-serif] whitespace-nowrap">PRT0001层NOTE。</p>
      <span className="h-6 w-px bg-[#c9cdd2]" />
      <span className="ml-[35px] h-6 w-px bg-[#c9cdd2]" />
      <span className="ml-1 h-[11px] w-[11px] rounded-full bg-[#45d34a]" />
      <span className="ml-0.5 h-1.5 w-1.5 rounded-full bg-[#cacbcd]" />
      <span className="ml-px h-1.5 w-1.5 rounded-full bg-[#cacbcd]" />
      <span className="ml-px h-6 w-px bg-[#c9cdd2]" />
      <button type="button" aria-label="查找" className="mx-[3px] flex h-[22px] w-10 items-center justify-center rounded-sm border border-[#bfc1c5] bg-linear-to-b from-white to-[#e9eaec]">
        <Ico w={16} h={16}>
          <path d="M3 1h2v3h1v11H0V9l2-5zM11 1h2v3l3 5v6h-6V4h1z" fill="#1c1c1a" />
          <path d="M6 5h4v4H6z" fill="#1c1c1a" />
          <path d="M2.500 6v8M12.500 6v8" stroke="#bdbb9f" />
        </Ico>
      </button>
      <span className="h-6 w-px bg-[#c9cdd2]" />
      <div className="relative mr-[19px] ml-24 flex items-center">
        <select aria-label="过滤器" className="h-[19px] w-[178px] appearance-none border border-[#bfc1c5] bg-[#f8f8f9] pl-1 text-[12px] leading-4">
          <option>智能</option>
        </select>
        <span className="pointer-events-none absolute right-0 flex h-[19px] w-[15px] items-center justify-center border border-[#c9cdd2]">
          <Ico w={8} h={5}><path d="M0 0h8L4 5z" fill="#555" /></Ico>
        </span>
      </div>
    </footer>
  );
}

function Watermark() {
  return (
    <div className="pointer-events-none absolute right-[5px] bottom-[5px] z-30 h-[62px] w-[206px] bg-white/35">
      <svg viewBox="0 0 206 62" className="h-full w-full" fill="none" aria-hidden="true">
        <ellipse cx="22" cy="24" rx="15" ry="22" transform="rotate(-38 22 24)" stroke="#8fa0a8" strokeWidth="3" strokeOpacity="0.9" />
        <path d="M50 34c-8-4-28-4-36 3-7 7 0 13 8 15" stroke="#b9c2c9" strokeWidth="3" />
        <path d="M43 21c14-2 17 12 11 22-5 9-12 14-20 14 14-5 24-21 17-30-2-3-5-4-8-2z" fill="#e07e80" stroke="#e07e80" />
        <text x="69" y="31" fontSize="29" fontWeight="700" fill="#6fc088" fillOpacity="0.75" fontFamily="'Noto Sans CJK SC', sans-serif">野火论坛</text>
        <text x="58" y="54" fontSize="15" fill="#a4d6d0" fillOpacity="0.8" fontFamily="'Open Sans', sans-serif">www.proewildfire.cn</text>
      </svg>
    </div>
  );
}

export default function App() {
  return (
    <div className="relative flex min-h-screen flex-col overflow-hidden bg-[#fbfbfb] font-['Noto_Sans_CJK_SC',sans-serif]">
      <div className="h-1 border-t border-[#565254] bg-[#979191]" />
      <TitleBar />
      <div className="px-1">
        <TabRow />
        <Ribbon />
      </div>
      <main className="flex min-h-[535px] flex-1 px-1 pr-[5px]">
        <Navigator />
        <div className="relative min-w-0 flex-1 bg-linear-to-b from-[#9e9b8f] to-[#e2dfd2] pt-px font-['Roboto','Noto_Sans_CJK_SC',sans-serif]">
          <Model />
          <ViewToolbar />
        </div>
      </main>
      <StatusBar />
      <div className="h-0.5 border-t border-[#979191]">
        <div className="ml-4 h-px w-4 bg-[#3f78a8]" />
      </div>
      <Watermark />
    </div>
  );
}
